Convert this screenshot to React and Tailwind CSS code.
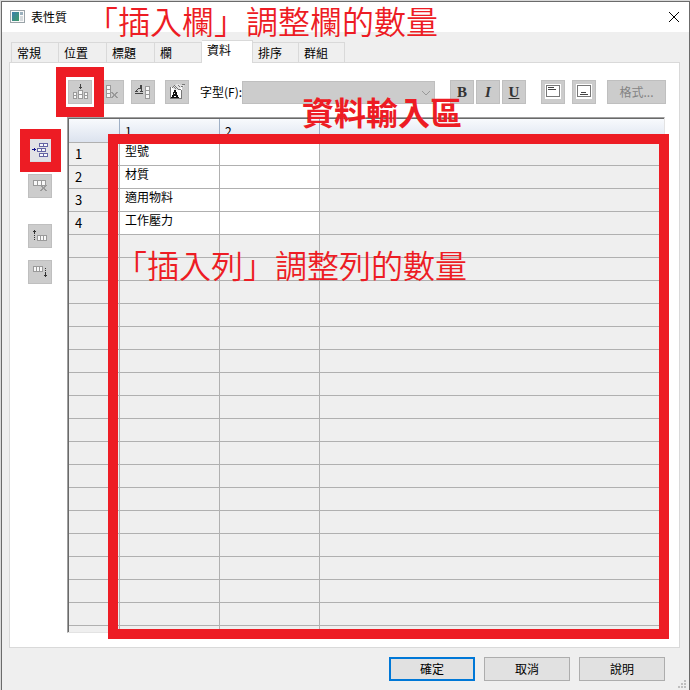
import React, { useState } from 'react';
import { clsx } from 'clsx';

const TABS = [
  { label: '常規', width: 'w-[48px]' },
  { label: '位置', width: 'w-[48px]' },
  { label: '標題', width: 'w-[48px]' },
  { label: '欄', width: 'w-[47px]' },
  { label: '資料', width: 'w-[51px]' },
  { label: '排序', width: 'w-[46px]' },
  { label: '群組', width: 'w-[46px]' },
];

const ROWS = ['型號', '材質', '適用物料', '工作壓力'];
const EMPTY_ROWS = 17;

// small stack of cells used by most of the toolbar glyphs
function Cells({ x, y, cols = 1, rows = 1, w = 4, h = 4, color = '#9a9a9a' }) {
  const items = [];
  for (let r = 0; r < rows; r++) {
    for (let c = 0; c < cols; c++) {
      items.push(
        <rect key={`${r}-${c}`} x={x + c * w + 0.5} y={y + r * h + 0.5} width={w} height={h} fill="#f8f8f8" stroke={color} />
      );
    }
  }
  return <g>{items}</g>;
}

function Glyph({ children }) {
  return (
    <svg width="22" height="22" viewBox="0 0 22 22" shapeRendering="crispEdges" aria-hidden="true">
      {children}
    </svg>
  );
}

function InsertColumnIcon() {
  return (
    <Glyph>
      <path d="M11 3h1v5h-1zM10 6h3v1h-3z" fill="#444" />
      <Cells x={4} y={11} rows={2} w={3} h={3} />
      <Cells x={9} y={9} rows={2} w={4} h={4} />
      <Cells x={15} y={11} rows={2} w={3} h={3} />
    </Glyph>
  );
}

function DeleteColumnIcon() {
  return (
    <Glyph>
      <Cells x={5} y={4} rows={3} w={4} h={4} />
      <path d="M10 11h2v1h1v1h1v-1h1v-1h2v1h-1v1h-1v2h1v1h1v1h-2v-1h-1v-1h-1v1h-1v1h-2v-1h1v-1h1v-2h-1v-1h-1z" fill="#999" />
    </Glyph>
  );
}

function ColumnStyleIcon() {
  return (
    <Glyph>
      <path d="M8 4h2v6h1v1H8v-1h1V8H6v1H5v1h1v1H3v-1h1V9h1V8h1V7h1V6h1zM7 7h1V6h-1zM3 12h8v1H3z" fill="#444" />
      <Cells x={13} y={5} rows={3} w={4} h={4} />
    </Glyph>
  );
}

function TextPropertiesIcon() {
  return (
    <Glyph>
      <path d="M4 6h12v12H4z" fill="#fff" />
      <path d="M4 6h1v12H4zM4 17h12v1H4zM15 9h1v9h-1z" fill="#777" />
      <path d="M6 7L10 3h3l2 1h3v2h-3l-1 3h-3l-2 1z" fill="#e2e2e2" />
      <path d="M6 6h1v1H6zM8 4h1v1H8zM7 5h1v1H7zM9 5h1v1H9zM8 6h1v1H8zM10 6h1v1h-1zM9 7h1v1H9zM11 7h1v1h-1zM12 4h1v1h-1zM13 5h1v1h-1zM12 8h3v1h-3zM15 5h2v1h-2zM16 3h3v1h-3z" fill="#777" />
      <path d="M8 9h2v2h1v3h1v2h1v1h-4v-1h1v-1H8v1h1v1H5v-1h1v-2h1v-3h1zM8 12v1h1v-1z" fill="#111" fillRule="evenodd" />
    </Glyph>
  );
}

function InsertRowIcon() {
  return (
    <Glyph>
      <path d="M3 10h2V9h1v1h1v1H6v1H5v-1H3z" fill="#11118c" />
      <Cells x={10} y={4} cols={2} w={4} h={3} color="#6464a4" />
      <Cells x={8} y={9} cols={2} w={4} h={3} color="#6464a4" />
      <Cells x={10} y={14} cols={2} w={4} h={3} color="#6464a4" />
    </Glyph>
  );
}

function DeleteRowIcon() {
  return (
    <Glyph>
      <Cells x={4} y={5} cols={3} w={4} h={5} />
      <path d="M11 10h2v1h1v1h1v-1h1v-1h2v1h-1v1h-1v2h1v1h1v1h-2v-1h-1v-1h-1v1h-1v1h-2v-1h1v-1h1v-2h-1v-1h-1z" fill="#999" />
    </Glyph>
  );
}

function RowAboveIcon() {
  return (
    <Glyph>
      <path d="M5 5h1v4h-1zM4 6h3v1H4zM5 10h1v1h-1zM5 12h1v1h-1zM5 14h1v1h-1z" fill="#333" />
      <Cells x={8} y={10} cols={3} w={3} h={5} />
    </Glyph>
  );
}

function RowBelowIcon() {
  return (
    <Glyph>
      <Cells x={4} y={5} cols={3} w={3} h={5} />
      <path d="M16 7h1v1h-1zM16 9h1v1h-1zM16 11h1v5h-1zM15 14h3v1h-3z" fill="#333" />
    </Glyph>
  );
}

function AlignTopIcon() {
  return (
    <Glyph>
      <path d="M3 3h16v15H3z" fill="#fff" />
      <rect x="4.5" y="4.5" width="13" height="11" fill="#fff" stroke="#777" />
      <path d="M6 6h6v1H6zM6 8h8v1H6z" fill="#444" />
    </Glyph>
  );
}

function AlignBottomIcon() {
  return (
    <Glyph>
      <path d="M3 3h16v15H3z" fill="#fff" />
      <rect x="4.5" y="4.5" width="13" height="11" fill="#fff" stroke="#777" />
      <path d="M8 11h5v1H8zM7 13h8v1H7z" fill="#444" />
    </Glyph>
  );
}

function ToolButton({ label, active, className, children }) {
  return (
    <button
      type="button"
      aria-label={label}
      className={clsx(
        'flex size-6 shrink-0 items-center justify-center border text-[#333]',
        active ? 'border-[#d8d8de] bg-[#e1e1e6]' : 'border-[#bfbfbf] bg-[#cccccc]',
        className
      )}
    >
      {children}
    </button>
  );
}

function TitleBar() {
  return (
    <header className="flex h-[30px] items-center bg-white pr-[7px] pl-2">
      <svg width="16" height="14" viewBox="0 0 16 14" shapeRendering="crispEdges" aria-hidden="true">
        <defs>
          <linearGradient id="app-pane" x1="0" y1="0" x2="1" y2="1">
            <stop offset="0" stopColor="#3d7fae" />
            <stop offset="1" stopColor="#3f9a67" />
          </linearGradient>
        </defs>
        <rect x="0.5" y="0.5" width="14" height="12" fill="#fafafa" stroke="#9aa3a8" />
        <path d="M2 2h7v9H2z" fill="url(#app-pane)" />
        <path d="M10 2h3v3h-3z" fill="#9ab0bd" />
        <path d="M10 6h3v5h-3z" fill="#d5dadd" />
      </svg>
      <h1 className="ml-[5px] text-[12px] leading-4">表性質</h1>
      <button type="button" aria-label="關閉" className="ml-auto flex size-4 items-center justify-center">
        <svg width="12" height="12" viewBox="0 0 12 12" fill="none" stroke="#000" aria-hidden="true">
          <path d="M1 1l10 10M11 1L1 11" />
        </svg>
      </button>
    </header>
  );
}

function TabStrip({ current, onChange }) {
  return (
    <div role="tablist" className="flex items-end pl-0.5">
      {TABS.map((tab, i) => {
        const selected = tab.label === current;
        return (
          <button
            key={tab.label}
            type="button"
            role="tab"
            aria-selected={selected}
            onClick={() => onChange(tab.label)}
            className={clsx(
              'border-t border-r border-[#d9d9d9] pl-[5px] text-left text-[12px] leading-4',
              tab.width,
              i === 0 && 'border-l',
              selected ? 'z-10 -mb-px h-[23px] bg-white pb-1' : 'h-5 bg-[#efefef]'
            )}
          >
            {tab.label}
          </button>
        );
      })}
    </div>
  );
}

function Toolbar() {
  return (
    <div className="flex items-center">
      <div className="relative">
        <ToolButton label="插入欄"><InsertColumnIcon /></ToolButton>
        <div className="pointer-events-none absolute -top-[13px] -left-3 z-20 h-[50px] w-12 border-10 border-[#ed1c24]" />
      </div>
      <ToolButton label="刪除欄" className="ml-2"><DeleteColumnIcon /></ToolButton>
      <ToolButton label="欄樣式" className="ml-[7px]"><ColumnStyleIcon /></ToolButton>
      <ToolButton label="文字性質" className="ml-[10px]"><TextPropertiesIcon /></ToolButton>
      <label htmlFor="font" className="ml-[11px] shrink-0 text-[12px] leading-4">字型(F):</label>
      <div className="relative min-w-0 flex-1">
        <select id="font" className="block h-[23px] w-full appearance-none border border-[#bfbfbf] bg-[#cccccc]" />
        <svg className="pointer-events-none absolute top-2 right-1" width="10" height="8" viewBox="0 0 10 8" fill="none" stroke="#999" aria-hidden="true">
          <path d="M1 2l4 4 4-4" />
        </svg>
      </div>
      <div className="ml-[15px] flex gap-0.5 font-['Liberation_Serif',serif] text-[15px] leading-4 font-bold">
        <ToolButton label="粗體">B</ToolButton>
        <ToolButton label="斜體" className="italic">I</ToolButton>
        <ToolButton label="底線" className="underline">U</ToolButton>
      </div>
      <ToolButton label="靠上對齊" className="ml-[15px]"><AlignTopIcon /></ToolButton>
      <ToolButton label="靠下對齊" className="ml-[7px]"><AlignBottomIcon /></ToolButton>
      <button type="button" className="ml-[11px] h-6 w-[59px] shrink-0 border border-[#bfbfbf] bg-[#cccccc] text-[12px] leading-4 text-[#838383]">
        格式...
      </button>
    </div>
  );
}

function RowTools() {
  return (
    <div className="flex w-[39px] shrink-0 flex-col pt-[21px]">
      <div className="relative w-6">
        <ToolButton label="插入列" active><InsertRowIcon /></ToolButton>
        <div className="pointer-events-none absolute -top-[9px] -left-2 z-20 h-[43px] w-[41px] border-10 border-[#ed1c24]" />
      </div>
      <ToolButton label="刪除列" className="mt-3"><DeleteRowIcon /></ToolButton>
      <ToolButton label="上方列" className="mt-[26px]"><RowAboveIcon /></ToolButton>
      <ToolButton label="下方列" className="mt-3"><RowBelowIcon /></ToolButton>
    </div>
  );
}

function DataGrid() {
  const line = 'border-r border-b border-[#b0b0b0]';
  const head = 'border-r border-b border-r-[#9fb0c6] border-b-[#b0b0b0] p-0 pl-[5px] text-left align-middle font-normal';
  return (
    <div className="border-t border-r border-b border-l border-t-[#a0a0a0] border-r-[#e3e3e3] border-b-[#e3e3e3] border-l-[#a0a0a0]">
      <div className="border-t border-l border-[#696969]">
        <table className="w-full table-fixed border-separate border-spacing-0 bg-[#efefef] text-[12px] leading-4">
          <colgroup>
            <col className="w-[51px]" />
            <col className="w-[100px]" />
            <col className="w-[100px]" />
            <col />
          </colgroup>
          <thead>
            <tr className="h-6 bg-linear-to-b from-[#f8fafd] to-[#dbe2ee]">
              <th className={head} />
              <th className={head}>1</th>
              <th className={head}>2</th>
              <th className="border-b border-[#b0b0b0] p-0" />
            </tr>
          </thead>
          <tbody>
            {ROWS.map((name, i) => (
              <tr key={name} className="h-[23px]">
                <th className={clsx(line, 'p-0 pl-1.5 text-left align-middle text-[13px] font-normal')}>
                  {i + 1}
                </th>
                <td className={clsx(line, 'bg-white p-0 pl-[5px] align-top')}>{name}</td>
                <td className={clsx(line, 'bg-white p-0')} />
                <td className="border-b border-[#b0b0b0] p-0" />
              </tr>
            ))}
            {Array.from({ length: EMPTY_ROWS }, (_, i) => (
              <tr key={i} className="h-[23px]">
                <td className={clsx(line, 'p-0')} />
                <td className={clsx(line, 'p-0')} />
                <td className={clsx(line, 'p-0')} />
                <td className="border-b border-[#b0b0b0] p-0" />
              </tr>
            ))}
            <tr className="h-1.5">
              <td className="border-r border-[#b0b0b0] p-0" />
              <td className="border-r border-[#b0b0b0] p-0" />
              <td className="border-r border-[#b0b0b0] p-0" />
              <td className="p-0" />
            </tr>
          </tbody>
        </table>
      </div>
    </div>
  );
}

function Note({ className, children }) {
  return (
    <p className={clsx('pointer-events-none absolute z-30 text-[32px] leading-8 whitespace-nowrap text-[#ed1c24]', className)}>
      {children}
    </p>
  );
}

function DialogButton({ primary, children }) {
  return (
    <button
      type="button"
      className={clsx(
        'h-6 w-[86px] bg-[#e1e1e1] text-[12px] leading-4',
        primary ? 'border-2 border-[#0078d7]' : 'border border-[#adadad]'
      )}
    >
      {children}
    </button>
  );
}

function App() {
  const [tab, setTab] = useState('資料');

  return (
    <div className="min-h-screen bg-[#d9d9d9] pt-px pl-px font-['Noto_Sans_CJK_TC',sans-serif] text-black">
      <div className="relative flex min-h-[calc(100vh-1px)] flex-col border-t border-r border-l border-[#6b6b6b] bg-[#efefef]">
        <TitleBar />
        <Note className="top-0.5 left-[84px] font-[350]">「插入欄」調整欄的數量</Note>

        <main className="pt-2 pr-[9px] pl-[7px]">
          <TabStrip current={tab} onChange={setTab} />
          <section className="border border-[#d9d9d9] bg-white pt-[17px] pr-[13px] pb-[14px] pl-[18px]">
            <div className="pl-10">
              <Toolbar />
            </div>
            <div className="mt-[13px] flex pr-px">
              <RowTools />
              <div className="relative min-w-0 flex-1">
                <DataGrid />
                <div className="pointer-events-none absolute top-[17px] -right-1 -bottom-[6px] left-[41px] z-20 border-10 border-[#ed1c24]" />
                <Note className="-top-[22px] left-[235px] font-bold">資料輸入區</Note>
                <Note className="top-[131px] left-12 font-[350]">「插入列」調整列的數量</Note>
              </div>
            </div>
          </section>
        </main>

        <footer className="flex justify-end gap-[9px] pt-[9px] pr-6 pb-2">
          <DialogButton primary>確定</DialogButton>
          <DialogButton>取消</DialogButton>
          <DialogButton>說明</DialogButton>
        </footer>
        <svg className="absolute right-[3px] bottom-0.5" width="8" height="8" viewBox="0 0 8 8" fill="#bfbfbf" aria-hidden="true">
          <path d="M6 0h2v2H6zM3 3h2v2H3zM6 3h2v2H6zM0 6h2v2H0zM3 6h2v2H3zM6 6h2v2H6z" />
        </svg>
      </div>
    </div>
  );
}

export default App;
